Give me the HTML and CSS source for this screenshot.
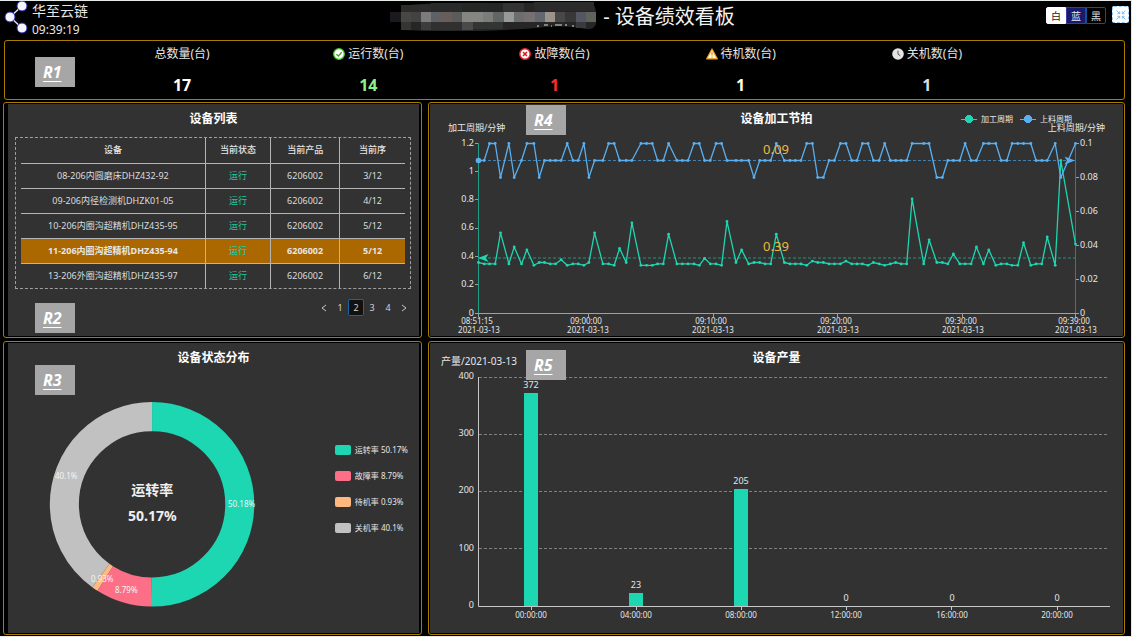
FILE: index.html
```html
<!DOCTYPE html>
<html lang="zh-CN">
<head>
<meta charset="utf-8">
<title>设备绩效看板</title>
<link rel="stylesheet" href="styles.css">
</head>
<body>
<div class="page">
  <header class="topbar">
    <div class="brand">
      <svg class="brand-logo" viewBox="0 0 24 34" aria-hidden="true">
        <path d="M18 5 6 16 18 27" fill="none" stroke="#dcdcff" stroke-width="1.5"/>
        <g fill="#f6f6ff" stroke="#2a2ab0" stroke-width="1">
          <circle cx="18" cy="5" r="5"/><circle cx="6" cy="16" r="5"/><circle cx="18" cy="27" r="5"/>
        </g>
      </svg>
      <div class="brand-text"><span class="brand-name">华至云链</span><time class="clock">09:39:19</time></div>
    </div>
    <h1 class="page-title">
      <svg class="masked-name" viewBox="0 0 208 30" aria-hidden="true">
        <path d="M11 4Q40 0 110 1L200 0Q206 2 206 12V22Q204 28 196 27Q172 22 146 26Q120 28 90 29H40L11 28Z" fill="#262626"/>
        <g>
          <path d="M11 3h30v7h-30z" fill="#2c2d2b"/><path d="M41 1h31v9H41z" fill="#282b2a"/><path d="M72 1h41v9H72z" fill="#252626"/><path d="M113 1h21v9h-21z" fill="#333"/><path d="M144 0h60v9h-60z" fill="#2b2b2b"/>
        </g>
        <g>
          <path d="M0 10h11v10H0z" fill="#1c191e"/><path d="M11 10h10v10H11z" fill="#474745"/><path d="M21 10h10v10H21z" fill="#444142"/>
          <path d="M31 10h10v10H31z" fill="#7c7c7e"/><path d="M41 10h11v10H41z" fill="#5e6264"/><path d="M52 10h10v10H52z" fill="#695d5a"/>
          <path d="M62 10h10v10H62z" fill="#5b5b5b"/><path d="M72 10h21v10H72z" fill="#858682"/><path d="M93 10h10v10H93z" fill="#7b7d7a"/>
          <path d="M103 10h11v10h-11z" fill="#626566"/><path d="M114 10h10v10h-10z" fill="#989a98"/><path d="M124 10h10v10h-10z" fill="#6c6e6d"/>
          <path d="M134 10h11v10h-11z" fill="#777073"/><path d="M145 10h10v10h-10z" fill="#646670"/><path d="M155 10h10v10h-10z" fill="#9c938b"/>
          <path d="M165 10h10v10h-10z" fill="#484848"/><path d="M175 10h11v10h-11z" fill="#393737"/><path d="M186 10h10v10h-10z" fill="#565663"/><path d="M196 10h10v10h-10z" fill="#5f635c"/>
        </g>
        <g>
          <path d="M11 20h10v8H11z" fill="#353634"/><path d="M31 20h10v8H31z" fill="#3c3d3d"/><path d="M41 20h31v8H41z" fill="#303030"/>
          <path d="M72 20h11v8H72z" fill="#4a4a4c"/><path d="M83 20h30v7H83z" fill="#333534"/><path d="M186 20h10v6h-10z" fill="#3a3a3e"/>
        </g>
        <path d="M147 24h2m5-1h4m3 1h1m3-1h7m3 0h2m5 1h2" stroke="#ddd" fill="none"/>
      </svg>
      <span>- 设备绩效看板</span>
    </h1>
    <div class="tools">
      <div class="theme-switch" role="group" aria-label="主题">
        <button class="theme theme-white" type="button">白</button><button class="theme theme-blue" type="button">蓝</button><button class="theme theme-black" type="button">黑</button>
      </div>
      <button class="fullscreen" type="button" aria-label="退出全屏">
        <svg viewBox="0 0 12 12" aria-hidden="true"><path d="M1.5 1.5 4.5 4.5M4.7 2.4v2.3H2.4M10.5 1.5 7.5 4.5M7.3 2.4v2.3H9.6M1.5 10.5 4.5 7.5M4.7 9.6V7.3H2.4M10.5 10.5 7.5 7.5M7.3 9.6V7.3H9.6" fill="none" stroke="#5fb0f4" stroke-width=".8"/></svg>
      </button>
    </div>
  </header>

  <section class="kpis">
    <span class="tag tag-kpi">R1</span>
    <div class="kpi"><div class="kpi-label">总数量(台)</div><strong class="kpi-value">17</strong></div>
    <div class="kpi"><div class="kpi-label"><svg class="kpi-icon" viewBox="0 0 12 12" aria-hidden="true"><circle cx="6" cy="6" r="5.3" fill="#fff" stroke="#4fc22a" stroke-width="1.3"/><path d="M3.4 6.2 5.4 8 8.7 4.3" fill="none" stroke="#3da81c" stroke-width="1.3"/></svg>运行数(台)</div><strong class="kpi-value kpi-green">14</strong></div>
    <div class="kpi"><div class="kpi-label"><svg class="kpi-icon" viewBox="0 0 12 12" aria-hidden="true"><circle cx="6" cy="6" r="5.2" fill="#fff" stroke="#e3242b" stroke-width="1.5"/><path d="M4 4 8 8M8 4 4 8" fill="none" stroke="#d9141c" stroke-width="1.5"/></svg>故障数(台)</div><strong class="kpi-value kpi-red">1</strong></div>
    <div class="kpi"><div class="kpi-label"><svg class="kpi-icon" viewBox="0 0 12 12" aria-hidden="true"><path d="M6 1 11.3 10.8H.7Z" fill="#fff6df" stroke="#f0a020" stroke-width="1.2" stroke-linejoin="round"/><path d="M6 4.2V7.6M6 8.5V9.6" stroke="#e09010" stroke-width="1.2"/></svg>待机数(台)</div><strong class="kpi-value kpi-cream">1</strong></div>
    <div class="kpi"><div class="kpi-label"><svg class="kpi-icon" viewBox="0 0 12 12" aria-hidden="true"><circle cx="6" cy="6" r="5.8" fill="#e4e4e4"/><path d="M6 2.7V6.2L8.4 7.8" fill="none" stroke="#555"/></svg>关机数(台)</div><strong class="kpi-value kpi-grey">1</strong></div>
  </section>

  <main class="board">
    <section class="panel panel-left">
      <span class="tag tag-list">R2</span>
      <header class="panel-head"><h2>设备列表</h2></header>
      <div class="table-box">
        <table class="devices">
          <colgroup><col class="col-device"><col class="col-state"><col class="col-product"><col class="col-step"></colgroup>
          <thead><tr><th>设备</th><th>当前状态</th><th>当前产品</th><th>当前序</th></tr></thead>
          <tbody>
            <tr><td>08-206内圆磨床DHZ432-92</td><td class="running">运行</td><td>6206002</td><td>3/12</td></tr>
            <tr><td>09-206内径检测机DHZK01-05</td><td class="running">运行</td><td>6206002</td><td>4/12</td></tr>
            <tr><td>10-206内圈沟超精机DHZ435-95</td><td class="running">运行</td><td>6206002</td><td>5/12</td></tr>
            <tr class="selected"><td>11-206内圈沟超精机DHZ435-94</td><td class="running">运行</td><td>6206002</td><td>5/12</td></tr>
            <tr><td>13-206外圈沟超精机DHZ435-97</td><td class="running">运行</td><td>6206002</td><td>6/12</td></tr>
          </tbody>
        </table>
      </div>
      <nav class="pager" aria-label="分页">
        <button type="button" aria-label="上一页"><svg viewBox="0 0 8 8" aria-hidden="true"><path d="M6 1 2 4 6 7"/></svg></button>
        <button type="button">1</button><button type="button" class="current" aria-current="page">2</button><button type="button">3</button><button type="button">4</button>
        <button type="button" aria-label="下一页"><svg viewBox="0 0 8 8" aria-hidden="true"><path d="M2 1 6 4 2 7"/></svg></button>
      </nav>
    </section>

    <section class="panel panel-right">
      <span class="tag tag-cycle">R4</span>
      <header class="panel-head">
        <h2>设备加工节拍</h2>
        <ul class="line-legend">
          <li class="key-green"><i></i>加工周期</li>
          <li class="key-blue"><i></i>上料周期</li>
        </ul>
      </header>
      <svg class="chart" id="cycle-chart" viewBox="430 132 693 204" role="img" aria-label="设备加工节拍">
        <g class="axis-name"><text x="448" y="131">加工周期/分钟</text><text x="1105" y="131" text-anchor="end">上料周期/分钟</text></g>
        <path class="axis" d="M478 313.5H1076M478.5 313v4M588.5 313v4M713.5 313v4M837.5 313v4M962.5 313v4M1075.5 313v4"/>
        <path class="axis" d="M475 143.5h3M475 171.5h3M475 199.5h3M475 228.5h3M475 256.5h3M475 284.5h3M475 313.5h3"/>
        <path class="axis" d="M1076 143.5h3M1076 177.5h3M1076 211.5h3M1076 245.5h3M1076 279.5h3M1076 313.5h3"/>
        <path class="axis-green" d="M478.5 143V313"/><path class="axis-blue" d="M1075.5 143V313"/>
        <g class="tick-value" text-anchor="end"><text x="474" y="146">1.2</text><text x="474" y="174">1</text><text x="474" y="202">0.8</text><text x="474" y="230">0.6</text><text x="474" y="259">0.4</text><text x="474" y="287">0.2</text><text x="474" y="316">0</text></g>
        <g class="tick-value"><text x="1080" y="146">0.1</text><text x="1080" y="180">0.08</text><text x="1080" y="214">0.06</text><text x="1080" y="248">0.04</text><text x="1080" y="282">0.02</text><text x="1080" y="316">0</text></g>
        <g class="tick" text-anchor="middle">
          <text x="477" y="324">08:51:15</text><text x="479" y="333">2021-03-13</text>
          <text x="586" y="324">09:00:00</text><text x="588" y="333">2021-03-13</text>
          <text x="711" y="324">09:10:00</text><text x="713" y="333">2021-03-13</text>
          <text x="836" y="324">09:20:00</text><text x="838" y="333">2021-03-13</text>
          <text x="961" y="324">09:30:00</text><text x="963" y="333">2021-03-13</text>
          <text x="1074" y="324">09:39:00</text><text x="1076" y="333">2021-03-13</text>
        </g>
        <path class="mean mean-green" d="M478 258H1075"/><path class="mean mean-blue" d="M478 160.5H1075"/>
        <defs>
          <marker id="dot-green" markerWidth="4" markerHeight="4" refX="2" refY="2" markerUnits="userSpaceOnUse"><circle cx="2" cy="2" r="1.4" fill="#1dd6b2"/></marker>
          <marker id="dot-blue" markerWidth="4" markerHeight="4" refX="2" refY="2" markerUnits="userSpaceOnUse"><circle cx="2" cy="2" r="1.4" fill="#5aaff0"/></marker>
        </defs>
        <polyline class="series series-green" id="series-green"/>
        <polyline class="series series-blue" id="series-blue"/>
        <path fill="#1dd6b2" d="M478 258 488.500 254 486 258 488.500 262Z"/>
        <circle cx="478.500" cy="160.500" r="2.800" fill="#5aaff0"/>
        <path fill="#5aaff0" d="M1075 160.500 1064.500 156.500 1067 160.500 1064.500 164.500Z"/>
        <g class="mean-value" text-anchor="middle"><text x="776" y="154">0.09</text><text x="776" y="251">0.39</text></g>
      </svg>
    </section>

    <section class="panel panel-left">
      <span class="tag tag-state">R3</span>
      <header class="panel-head"><h2>设备状态分布</h2></header>
      <div class="state-body">
        <svg class="chart donut" viewBox="8 371 326 261" role="img" aria-label="设备状态分布">
          <g class="ring" transform="rotate(-90 151.700 504)">
            <circle cx="151.700" cy="504" r="87.500" pathLength="100" stroke="#1dd6b2" stroke-dasharray="50.18 49.82"/>
            <circle cx="151.700" cy="504" r="87.500" pathLength="100" stroke="#fc6f87" stroke-dasharray="8.79 91.21" stroke-dashoffset="-50.18"/>
            <circle cx="151.700" cy="504" r="87.500" pathLength="100" stroke="#ffb980" stroke-dasharray=".93 99.07" stroke-dashoffset="-58.97"/>
            <circle cx="151.700" cy="504" r="87.500" pathLength="100" stroke="#c1c1c1" stroke-dasharray="40.1 59.9" stroke-dashoffset="-59.9"/>
          </g>
          <g class="slice-label" text-anchor="middle"><text x="241" y="507">50.18%</text><text x="126" y="592">8.79%</text><text x="102" y="581">0.93%</text><text x="66" y="479">40.1%</text></g>
          <g class="donut-total" text-anchor="middle"><text x="152" y="495">运转率</text><text x="152" y="521">50.17%</text></g>
        </svg>
        <ul class="state-legend">
          <li class="state-run"><i></i>运转率 50.17%</li>
          <li class="state-fault"><i></i>故障率 8.79%</li>
          <li class="state-idle"><i></i>待机率 0.93%</li>
          <li class="state-off"><i></i>关机率 40.1%</li>
        </ul>
      </div>
    </section>

    <section class="panel panel-right">
      <span class="tag tag-output">R5</span>
      <header class="panel-head"><h2>设备产量</h2></header>
      <svg class="chart" viewBox="430 371 693 261" role="img" aria-label="设备产量">
        <text class="axis-name axis-name-large" x="441" y="365">产量/2021-03-13</text>
        <path class="grid" d="M479 377.500H1109M479 434.500H1109M479 491.500H1109M479 548.500H1109"/>
        <path class="axis axis-light" d="M478.500 377V606.500H1110M531.500 606v4M636.500 606v4M741.500 606v4M846.500 606v4M951.500 606v4M1057.500 606v4"/>
        <g class="tick-value" text-anchor="end"><text x="474" y="379">400</text><text x="474" y="436">300</text><text x="474" y="493">200</text><text x="474" y="551">100</text><text x="474" y="608">0</text></g>
        <g fill="#1dd6b2"><rect x="524" y="393" width="14" height="213"/><rect x="629" y="593" width="14" height="13"/><rect x="734" y="489" width="14" height="117"/></g>
        <g class="tick-value" text-anchor="middle"><text x="531" y="388">372</text><text x="636" y="588">23</text><text x="741" y="484">205</text><text x="846" y="601">0</text><text x="952" y="601">0</text><text x="1057" y="601">0</text></g>
        <g class="tick" text-anchor="middle"><text x="531" y="618">00:00:00</text><text x="636" y="618">04:00:00</text><text x="741" y="618">08:00:00</text><text x="846" y="618">12:00:00</text><text x="952" y="618">16:00:00</text><text x="1057" y="618">20:00:00</text></g>
      </svg>
    </section>
  </main>
</div>
<script src="charts.js"></script>
</body>
</html>
```

FILE: styles.css
```css
* { box-sizing: border-box; }
body {
  margin: 0;
  background: #e6eae8;
  color: #e6e6e6;
  font-family: "Noto Sans", "Noto Sans CJK SC", sans-serif;
}
h1, h2, ul { margin: 0; padding: 0; }
ul { list-style: none; }
button { margin: 0; padding: 0; font-family: inherit; cursor: pointer; }

.page {
  min-height: calc(100vh - 2px);
  margin: 1px 1px 1px 0;
  background: #000;
}

.topbar {
  display: grid;
  grid-template-columns: 1fr auto 1fr;
  align-items: start;
  height: 39px;
  padding: 0 2px 0 4px;
}
.brand { display: flex; gap: 4px; }
.brand-logo { width: 24px; height: 34px; }
.brand-text { display: flex; flex-direction: column; }
.brand-name { font-size: 14px; line-height: 20px; }
.clock { font-size: 12px; line-height: 18px; }
.page-title {
  display: flex;
  align-items: center;
  gap: 5px;
  height: 32px;
  margin-right: 8px;
  color: #f2f2f2;
  font-size: 20px;
  font-weight: 400;
  line-height: 32px;
  white-space: nowrap;
}
.masked-name { width: 208px; height: 30px; }
.tools { display: flex; justify-content: flex-end; gap: 6px; padding-top: 5px; }
.theme-switch { display: flex; margin-top: 1px; }
.theme {
  width: 20px;
  height: 17px;
  border: 1px solid #0f548c;
  font-size: 10px;
  line-height: 14px;
}
.theme-white { background: #fff; border-color: #fff; color: #222; border-radius: 2px 0 0 2px; }
.theme-blue { background: #191970; color: #e8e8e8; border-color: #3a3aa0; }
.theme-black { background: #000; color: #e0e0e0; border-radius: 0 2px 2px 0; }
.fullscreen {
  display: grid;
  place-items: center;
  width: 17px;
  height: 17px;
  border: 1px dashed #8cc8f8;
  border-radius: 2px;
  background: #fff;
}
.fullscreen svg { width: 12px; height: 12px; }

.kpis {
  position: relative;
  display: grid;
  grid-template-columns: repeat(5, 1fr);
  margin: 0 6px 0 4px;
  padding: 4px 104px 2px 84px;
  border: 1px solid #a87c00;
  border-radius: 3px;
}
.kpi { display: flex; flex-direction: column; align-items: center; }
.kpi-label { display: flex; align-items: center; gap: 3px; font-size: 12px; line-height: 18px; }
.kpi-icon { width: 12px; height: 12px; }
.kpi-value { padding-top: 10px; color: #fff; font-size: 16px; line-height: 24px; }
.kpi-green { color: #8cf08c; }
.kpi-red { color: #ff2b2b; }
.kpi-cream { color: #ffffdc; }
.kpi-grey { color: #dcdcdc; }

.board {
  display: grid;
  grid-template-columns: 419fr 697fr;
  gap: 3px 6px;
  padding: 2px 6px 0 3px;
}
.panel {
  position: relative;
  border: 1px solid #a87c00;
  border-radius: 3px;
  background: #323232 content-box;
  padding: 1px;
}
.panel-left { padding: 1px 2px 1px 4px; }
.panel-head {
  display: grid;
  grid-template-columns: 1fr auto 1fr;
  align-items: center;
  height: 28px;
  padding-top: 2px;
}
.panel-head h2 { grid-column: 2; color: #fff; font-size: 12px; line-height: 18px; }

.tag {
  position: absolute;
  z-index: 1;
  width: 40px;
  height: 30px;
  background: #a6a6a6;
  color: #fff;
  font-family: "Open Sans", "Noto Sans", sans-serif;
  font-size: 16px;
  font-style: italic;
  font-weight: 700;
  line-height: 30px;
  padding-left: 8px;
  text-decoration: underline;
  text-underline-offset: 3px;
  text-decoration-thickness: 1px;
}
.tag-kpi { left: 30px; top: 16px; }
.tag-list { left: 31px; bottom: 4px; }
.tag-state { left: 31px; top: 23px; }
.tag-cycle { left: 97px; top: 2px; }
.tag-output { left: 97px; top: 8px; }

.table-box {
  margin: 5px 8px 0 7px;
  padding: 0 5px;
  border: 1px dashed #a0a0a0;
}
.devices {
  width: 100%;
  border-collapse: collapse;
  table-layout: fixed;
  color: #dcdcdc;
  font-size: 9px;
  line-height: 12px;
  text-align: center;
}
.devices th, .devices td { height: 25px; padding: 0; border: 1px solid #b4b4b4; white-space: nowrap; }
.devices th { color: #e6e6e6; font-weight: 500; }
.devices tr > :first-child { border-left: 0; }
.devices tr > :last-child { border-right: 0; }
.devices thead th { border-top: 0; }
.devices tbody tr:last-child td { border-bottom: 0; }
.col-device { width: 48%; }
.col-state { width: 17%; }
.col-product { width: 18%; }
.devices .running { color: #1fc79b; }
.devices .selected { background: #ab6700; color: #e6e6e6; font-weight: 700; }
.devices .selected .running { font-weight: 500; }

.pager { display: flex; justify-content: flex-end; margin: 10px 7px 0 0; }
.pager button {
  display: grid;
  place-items: center;
  width: 16px;
  height: 17px;
  border: 1px solid transparent;
  border-radius: 2px;
  background: transparent;
  color: #d2d2d2;
  font-size: 9px;
  line-height: 14px;
}
.pager .current { border-color: #1565ad; background: #111; }
.pager svg { width: 8px; height: 8px; fill: none; stroke: #c8c8c8; }

.line-legend { display: flex; justify-content: flex-end; gap: 7px; padding-right: 51px; font-size: 8px; line-height: 12px; }
.line-legend li { display: flex; align-items: center; gap: 4px; }
.line-legend i {
  width: 16px;
  height: 8px;
  background: radial-gradient(circle, currentColor 4px, transparent 4px), linear-gradient(currentColor, currentColor) center / 100% 1px no-repeat;
}
.key-green i { color: #1dd6b2; }
.key-blue i { color: #5aaff0; }

.chart { display: block; width: 100%; height: auto; overflow: visible; }
.chart text { fill: #e6e6e6; }
.axis-name { font-size: 9px; }
.axis-name-large { font-size: 10px; }
.tick { font-size: 8px; }
.tick-value { font-size: 9px; }
.axis { fill: none; stroke: #a0a0a0; }
.axis-light { stroke: #c8c8c8; }
.axis-green { stroke: #1c9f86; }
.axis-blue { stroke: #3f7396; }
.grid { stroke: #808080; stroke-dasharray: 3 2; fill: none; }
.mean { stroke-dasharray: 3 2; fill: none; }
.mean-green { stroke: #299079; }
.mean-blue { stroke: #4280b0; }
.series { fill: none; stroke-width: 1.3px; stroke-linejoin: round; }
.series-green { stroke: #1dd6b2; marker: url(#dot-green); }
.series-blue { stroke: #5aaff0; marker: url(#dot-blue); }
.chart .mean-value text { fill: #efb83a; font-size: 13px; }

.state-body { display: flex; align-items: flex-start; }
.donut { flex: 326; min-width: 0; }
.ring circle { fill: none; stroke-width: 29px; }
.slice-label { font-size: 8px; }
.chart .slice-label text { fill: #f4f4f4; }
.chart .donut-total text { fill: #f0f0f0; font-size: 14px; font-weight: 700; }
.state-legend {
  flex: 84;
  display: flex;
  flex-direction: column;
  gap: 14px;
  padding-top: 73px;
  font-size: 8px;
  line-height: 12px;
  white-space: nowrap;
}
.state-legend li { display: flex; align-items: center; gap: 4px; }
.state-legend i { width: 16px; height: 10px; border-radius: 2px; }
.state-run i { background: #1dd6b2; }
.state-fault i { background: #fc6f87; }
.state-idle i { background: #ffb980; }
.state-off i { background: #c1c1c1; }
```

FILE: charts.js
```javascript
// Each sample: position along the time axis (0-1790), machining cycle, loading cycle.
const samples = [
  [0, .36, .09], [17, .35, .09], [33, .35, .1], [50, .35, .1], [66, .57, .08], [91, .35, .1], [107, .47, .08],
  [129, .35, .09], [145, .45, .1], [166, .34, .1], [182, .36, .08], [198, .36, .09], [215, .35, .09], [231, .35, .09],
  [248, .38, .09], [266, .34, .1], [283, .35, .09], [299, .35, .09], [316, .34, .1], [331, .36, .08], [348, .57, .09],
  [373, .35, .09], [390, .35, .1], [407, .34, .1], [423, .46, .09], [443, .36, .09], [460, .64, .09], [487, .34, .1],
  [504, .34, .1], [521, .34, .1], [537, .35, .09], [554, .35, .09], [570, .56, .1], [595, .35, .09], [611, .35, .09],
  [628, .35, .09], [646, .35, .1], [662, .34, .1], [678, .39, .09], [695, .35, .09], [712, .35, .1], [729, .34, .1],
  [745, .65, .09], [772, .36, .09], [789, .45, .09], [810, .35, .09], [826, .36, .08], [843, .36, .09], [859, .35, .09],
  [876, .35, .09], [893, .56, .1], [917, .36, .09], [934, .35, .09], [950, .35, .09], [967, .35, .09], [984, .34, .1],
  [1001, .37, .1], [1017, .36, .08], [1034, .36, .08], [1051, .35, .09], [1067, .35, .09], [1085, .35, .1],
  [1102, .37, .1], [1119, .35, .09], [1135, .35, .09], [1151, .35, .1], [1168, .34, .1], [1184, .36, .09],
  [1201, .35, .09], [1218, .34, .1], [1235, .35, .09], [1251, .36, .09], [1267, .35, .09], [1284, .35, .09],
  [1300, .81, .1], [1335, .35, .1], [1351, .52, .1], [1374, .36, .08], [1391, .36, .08], [1407, .35, .09],
  [1424, .42, .09], [1443, .35, .09], [1459, .35, .1], [1477, .35, .09], [1493, .47, .09], [1514, .35, .1],
  [1530, .45, .1], [1551, .34, .1], [1567, .35, .09], [1584, .35, .09], [1600, .34, .1], [1617, .34, .1],
  [1634, .5, .1], [1656, .34, .1], [1672, .35, .09], [1689, .35, .09], [1705, .54, .09], [1729, .34, .1],
  [1746, 1.08, .08], [1790, .49, .1]
];
const plot = { left: 478.5, bottom: 313.5, width: 597, height: 170 };

function draw(id, column, max) {
  const points = samples.map(s => {
    const x = plot.left + s[0] / 1790 * plot.width;
    const y = plot.bottom - s[column] / max * plot.height;
    return x.toFixed(1) + "," + y.toFixed(1);
  });
  document.getElementById(id).setAttribute("points", points.join(" "));
}

draw("series-green", 1, 1.2);
draw("series-blue", 2, .1);
```
